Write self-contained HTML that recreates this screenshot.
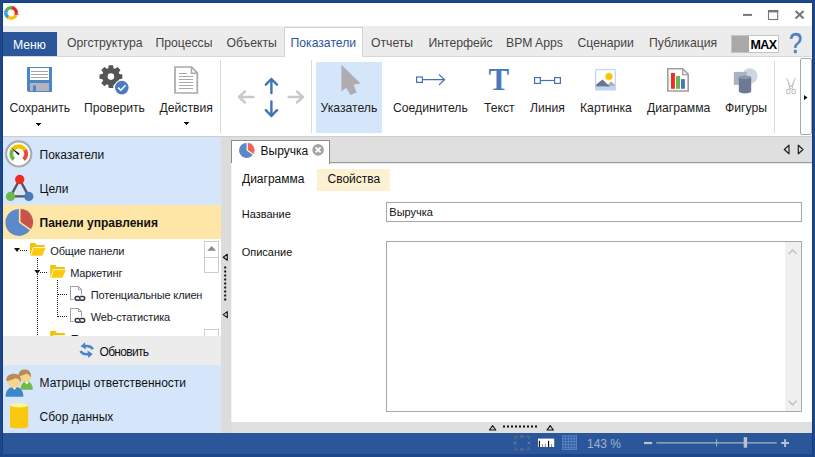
<!DOCTYPE html>
<html><head><meta charset="utf-8">
<style>
html,body{margin:0;padding:0;}
body{width:815px;height:457px;position:relative;overflow:hidden;background:#1c478a;font-family:"Liberation Sans",sans-serif;}
.a{position:absolute;}
.t{position:absolute;white-space:nowrap;line-height:1;}
.tab{font-size:12.2px;color:#454545;top:36.7px;}
.rl{font-size:12.2px;color:#1e1e1e;top:101.6px;}
.pl{font-size:12px;color:#111;}
.tr{font-size:11px;color:#1a1a2a;letter-spacing:-0.15px;}
svg{position:absolute;overflow:visible;}
</style></head><body>
<!-- title bar -->
<div class="a" style="left:2px;top:2px;width:811px;height:452px;background:#123d80"></div>
<div class="a" style="left:3px;top:3px;width:809px;height:23px;background:#fff"></div>
<svg width="815" height="30" style="left:0;top:0" fill="none" stroke-width="3.6">
<g stroke-width="3.3">
<path d="M5.98 11.53A5.3 5.3 0 0 1 10.92 7.60" stroke="#5cb84a"/>
<path d="M11.02 10.50L10.81 4.70L12.91 7.92Z" fill="#5cb84a" stroke="none"/>
<path d="M11.84 7.65A5.3 5.3 0 0 1 16.35 13.64" stroke="#e8261d"/>
<path d="M13.48 13.23L19.22 14.04L15.69 15.55Z" fill="#e8261d" stroke="none"/>
<path d="M15.78 15.39A5.3 5.3 0 0 1 8.61 17.58" stroke="#f7c300"/>
<path d="M9.97 15.02L7.25 20.14L7.04 16.31Z" fill="#f7c300" stroke="none"/>
<path d="M7.84 17.08A5.3 5.3 0 0 1 5.85 12.16" stroke="#3b95e2"/>
<path d="M8.72 12.57L2.98 11.76L6.51 10.25Z" fill="#3b95e2" stroke="none"/>
</g>
<g stroke="#777" stroke-width="2">
<path d="M743 14.9H752"/>
<path d="M795.6 11L803.6 18.6M803.6 11L795.6 18.6" stroke-width="2.1"/>
</g>
<rect x="768.5" y="10.5" width="9.2" height="9" fill="none" stroke="#777" stroke-width="1.1"/>
<rect x="768" y="10" width="10.2" height="2.4" fill="#777" stroke="none"/>
</svg>
<!-- menu bar -->
<div class="a" style="left:3px;top:26px;width:809px;height:31px;background:#ececec"></div>
<div class="a" style="left:3px;top:56px;width:809px;height:1px;background:#d6d6d6"></div>
<div class="a" style="left:3px;top:32px;width:54px;height:24px;background:#2b579a"></div>
<div class="t" style="left:13px;top:38.7px;font-size:12.2px;color:#fff">Меню</div>
<div class="a" style="left:284px;top:27px;width:77px;height:30px;background:#fff;border:1px solid #d2d2d2;border-bottom:none"></div>
<div class="t tab" style="left:67px">Оргструктура</div>
<div class="t tab" style="left:155.5px">Процессы</div>
<div class="t tab" style="left:226.5px">Объекты</div>
<div class="t tab" style="left:290.5px;color:#2b579a">Показатели</div>
<div class="t tab" style="left:371px">Отчеты</div>
<div class="t tab" style="left:428.5px">Интерфейс</div>
<div class="t tab" style="left:506px">BPM Apps</div>
<div class="t tab" style="left:577.5px">Сценарии</div>
<div class="t tab" style="left:649px">Публикация</div>
<div class="a" style="left:731px;top:35px;width:46px;height:16px;background:#fff;border:1px solid #c4c4c4"></div>
<div class="a" style="left:732px;top:36px;width:17px;height:16px;background:#a9a9a9"></div>
<div class="t" style="left:750.5px;top:38.6px;font-size:12.5px;font-weight:bold;color:#000;letter-spacing:-0.6px">MAX</div>
<div class="t" style="left:789.4px;top:27.6px;font-size:29.5px;color:#4d7dbf;transform:scaleX(0.8);transform-origin:0 0;-webkit-text-stroke:0.45px #4d7dbf">?</div>
<!-- ribbon -->
<div class="a" style="left:3px;top:57px;width:809px;height:79px;background:#fff"></div>
<div class="a" style="left:3px;top:136px;width:809px;height:1px;background:#cdcdcd"></div>
<div class="t rl" style="left:9.5px">Сохранить</div>
<div class="t rl" style="left:84px">Проверить</div>
<div class="t rl" style="left:159.5px">Действия</div>
<div class="a" style="left:316px;top:62px;width:66px;height:71px;background:#d4e6fa"></div>
<div class="t rl" style="left:320.5px">Указатель</div>
<div class="t rl" style="left:393px">Соединитель</div>
<div class="t rl" style="left:484px">Текст</div>
<div class="t" style="left:488.4px;top:63.9px;font-family:'Liberation Serif',serif;font-weight:bold;font-size:31px;color:#4a7ab9">T</div>
<div class="t rl" style="left:530px">Линия</div>
<div class="t rl" style="left:580px">Картинка</div>
<div class="t rl" style="left:647px">Диаграмма</div>
<div class="t rl" style="left:725px">Фигуры</div>
<div class="a" style="left:220px;top:60px;width:1px;height:73px;background:#dadada"></div>
<div class="a" style="left:311px;top:60px;width:1px;height:73px;background:#dadada"></div>
<div class="a" style="left:774px;top:61px;width:1px;height:72px;background:#dadada"></div>
<div class="a" style="left:800px;top:58px;width:10px;height:75px;background:#fff;border:1px solid #a9a9a9;border-radius:2px"></div>
<svg width="815" height="140" style="left:0;top:0">
<!-- floppy -->
<path d="M27 67H52V92H28.5L27 90.5Z" fill="#4a86c9"/>
<rect x="30" y="68" width="19" height="12" fill="#fff"/>
<path d="M31 71.5H48M31 74.5H48M31 77.5H48" stroke="#a6a6a6" stroke-width="1"/>
<rect x="30" y="83" width="19" height="8" fill="#b4b4ba"/>
<rect x="33" y="85.5" width="3" height="5.5" fill="#4a86c9"/>
<path d="M36 123H41V124H40V125H39V126H38V125H37V124H36Z" fill="#111"/>
<path d="M184 122H189V123H188V124H187V125H186V124H185V123H184Z" fill="#111"/>
<!-- gear -->
<path d="M108.33 68.18 L108.69 65.21 L113.11 65.21 L113.47 68.18 L115.03 68.83 L117.39 66.98 L120.52 70.11 L118.67 72.47 L119.32 74.03 L122.29 74.39 L122.29 78.81 L119.32 79.17 L118.67 80.73 L120.52 83.09 L117.39 86.22 L115.03 84.37 L113.47 85.02 L113.11 87.99 L108.69 87.99 L108.33 85.02 L106.77 84.37 L104.41 86.22 L101.28 83.09 L103.13 80.73 L102.48 79.17 L99.51 78.81 L99.51 74.39 L102.48 74.03 L103.13 72.47 L101.28 70.11 L104.41 66.98 L106.77 68.83Z" fill="#555"/>
<circle cx="110.9" cy="76.6" r="3.3" fill="#fff"/>
<circle cx="121.8" cy="87.6" r="7.8" fill="#fff"/>
<circle cx="121.8" cy="87.6" r="6.8" fill="#4a7cc1"/>
<path d="M118.2 87.6L120.8 90.2L125.6 85.2" stroke="#fff" stroke-width="1.6" fill="none"/>
<!-- doc -->
<path d="M175 67H191.5L197.3 72.8V93H175Z" fill="#fff" stroke="#a9a9a9" stroke-width="1.7"/>
<path d="M191.5 67V73.2H197.3" fill="none" stroke="#a9a9a9" stroke-width="1.5"/>
<path d="M179 73.5H187M179 76.5H193M179 79.5H193M179 82.5H193M179 85.5H193M179 88.5H193" stroke="#a9a9a9" stroke-width="1"/>
<!-- arrows -->
<g fill="none" stroke-width="2.4" stroke-linecap="round" stroke-linejoin="round">
<path d="M271.4 79V93M265.8 84.6L271.4 79L277 84.6" stroke="#3f73b9"/>
<path d="M271.4 101.5V116M265.8 110.2L271.4 116L277 110.2" stroke="#3f73b9"/>
<path d="M239 97H253.5M245 91.5L239 97L245 102.5" stroke="#c9c9c9"/>
<path d="M288.6 97H303M297 91.5L303 97L297 102.5" stroke="#c9c9c9"/>
</g>
<!-- pointer -->
<path d="M341.4 64.8V91.5L346.2 87.8L350.3 95L356.7 92.6L353.6 84.7L360.6 83.5Z" fill="#b0acb1"/>
<!-- connector -->
<g fill="none" stroke="#4672b5" stroke-width="1.2">
<rect x="416.6" y="77" width="5.8" height="5.4"/>
<path d="M422.4 79.7H444.5M439 74.4L444.5 79.7L439 85"/>
<rect x="534.6" y="77.6" width="5.8" height="5.8"/>
<rect x="554.6" y="77.6" width="5.8" height="5.8"/>
<path d="M540.4 80.5H554.6"/>
</g>
<!-- picture -->
<rect x="595" y="69" width="21" height="21.6" rx="1.5" fill="#bcd6fb"/>
<rect x="596.2" y="70.2" width="18.6" height="16.4" fill="#fff"/>
<circle cx="609" cy="76.5" r="4.2" fill="#fbe9a0"/>
<circle cx="609" cy="76.5" r="3.2" fill="#f7c500"/>
<path d="M606 86.6L611.2 81.2L614.8 84.8V86.6Z" fill="#b3aeb2"/>
<path d="M596.2 86.6V84.4L602.5 79.4L609.8 86.6Z" fill="#6b7591"/>
<!-- chart -->
<path d="M667.8 68.8H682.7L688.2 74.3V91H667.8Z" fill="#fff" stroke="#a19d9d" stroke-width="1.6"/>
<path d="M682.7 68.8V74.6H688.2" fill="none" stroke="#a19d9d" stroke-width="1.4"/>
<rect x="671" y="73" width="3.9" height="15.8" fill="#ee2b25"/>
<rect x="676" y="76" width="4" height="12.8" fill="#6ab64b"/>
<rect x="681" y="79.1" width="3.9" height="9.7" fill="#4a75b5"/>
<!-- shapes -->
<circle cx="749.8" cy="76" r="7.7" fill="#cdd5e1"/>
<rect x="733.8" y="71.9" width="13" height="13" fill="#a9b3c6"/>
<path d="M738.8 77.2V91.6A6.2 1.8 0 0 0 751.2 91.6V77.2Z" fill="#6d7a95"/>
<ellipse cx="745" cy="77.2" rx="6.2" ry="1.8" fill="#8c97ad"/>
<!-- scissors -->
<path d="M786.2 78L787.2 78L791 86.4L789.4 87.2Z" fill="#c6c6c6"/>
<path d="M795.8 78L794.8 78L791 86.4L792.6 87.2Z" fill="#c6c6c6"/>
<g fill="none" stroke="#c2c2c2" stroke-width="1.1">
<ellipse cx="791" cy="87.4" rx="1.6" ry="1.1"/>
<rect x="786.6" y="89.4" width="3.4" height="4.2" rx="1.2"/>
<rect x="792" y="89.4" width="3.4" height="4.2" rx="1.2"/>
</g>
<path d="M804 95L807.5 97.5L804 100.2Z" fill="#111"/>
</svg>
<!-- left panel -->
<div class="a" style="left:3px;top:137px;width:218px;height:296px;background:#d5e6fa"></div>
<div class="a" style="left:3px;top:205px;width:218px;height:34px;background:#fee6a6"></div>
<div class="a" style="left:3px;top:239px;width:218px;height:97px;background:#fff"></div>
<svg width="230" height="457" style="left:0;top:0">
<!-- gauge -->
<circle cx="18.7" cy="153.9" r="12.6" fill="#fff" stroke="#acacac" stroke-width="2.2"/>
<g fill="none" stroke-width="4">
<path d="M13.75 159.40A7.4 7.4 0 0 1 12.42 149.98" stroke="#6cb84a"/>
<path d="M12.42 149.98A7.4 7.4 0 0 1 24.98 149.98" stroke="#f6c200"/>
<path d="M24.98 149.98A7.4 7.4 0 0 1 23.65 159.40" stroke="#e8493a"/>
</g>
<path d="M10.8 147.6L19.6 153.6L18.4 155.2Z" fill="#111"/>
<!-- triangle -->
<path d="M19.7 179.5L10.5 196.4H28.8Z" fill="none" stroke="#525669" stroke-width="2.4"/>
<circle cx="19.7" cy="179.5" r="4.7" fill="#f02b21"/>
<circle cx="10.5" cy="196.4" r="4.6" fill="#6cb94b"/>
<circle cx="28.8" cy="196.4" r="4.6" fill="#4b79b8"/>
<!-- pie -->
<path d="M18.9 222.4L29.96 230.14A13.5 13.5 0 1 1 18.9 208.9Z" fill="#5b89c9"/>
<path d="M20.0 222.0V208.50A13.5 13.5 0 0 1 31.06 229.74Z" fill="#c9534a" stroke="#fee6a6" stroke-width="0.9"/>
<!-- tree -->
<path d="M14 248H20L17 252Z" fill="#111"/>
<path d="M34.3 270H40.3L37.3 274Z" fill="#111"/>
<g stroke="#222" stroke-width="1" stroke-dasharray="1 1" fill="none">
<path d="M20 250.5H27"/>
<path d="M37.5 258V337"/>
<path d="M40 272.5H47"/>
<path d="M57.5 280V317"/>
<path d="M58 294.5H67M58 316.5H67"/>
</g>
<g id="fold">
<path d="M30 243H35.3L36.6 245H44.6V247.4H33.2L30.6 255.8H30Z" fill="#f3c204"/>
<path d="M33.2 247.6H45.8L42.2 255.8H30.6Z" fill="#f8cb0f"/>
<path d="M30.6 255.8L33.2 247.6H45.8" stroke="#fff" stroke-width="0.8" fill="none"/>
</g>
<use href="#fold" x="20.2" y="22"/>
<use href="#fold" x="20.2" y="88"/>
<g id="dlink">
<path d="M73.8 299.5H70.5V286.5H78.5L81.5 289.5V294.6" fill="none" stroke="#a29e9e" stroke-width="1"/>
<path d="M78.5 286.5V289.5H81.5" fill="none" stroke="#a29e9e" stroke-width="1"/>
<path d="M79.6 300.2H77A1.85 1.85 0 0 1 77 296.5H78.4C79.6 296.5 79.9 297.6 79.9 298.4M80.2 296.5H82.9A1.85 1.85 0 0 1 82.9 300.2H81.5C80.3 300.2 79.9 299.2 79.9 298.4" fill="none" stroke="#2b304b" stroke-width="1.4"/>
</g>
<use href="#dlink" y="22"/>
<!-- people -->
<path d="M20.4 389.8C20.4 384.2 23.6 381.2 26.8 381.2C30 381.2 32.8 384.2 32.8 389.8Z" fill="#72b84b"/>
<path d="M24.6 382L26.8 384.2L29 382Z" fill="#fff"/>
<circle cx="25.2" cy="376.2" r="6" fill="#f4d58c"/>
<path d="M18.6 376.4C18 371.2 21.4 369.4 25 369.4C29.4 369.4 31.6 372.6 30.8 377.6C29.8 375 28.2 374.2 26.2 373.4C24.6 375 21.6 375.4 18.6 376.4Z" fill="#b98b5b"/>
<path d="M5.6 396.8C5.6 390 9.5 386.8 14.5 386.8C19.5 386.8 23.4 390 23.4 396.8Z" fill="#3e86c7"/>
<path d="M12.2 387.2L14.5 389.8L16.8 387.2Z" fill="#fff"/>
<circle cx="14" cy="381.2" r="6.8" fill="#f4d58c"/>
<path d="M6.4 381C5.8 376 9.6 373.8 14 373.8C19 373.8 21.8 377 20.8 382.6C19.8 379.6 18.2 378.8 15.8 378C13.6 379.8 10.2 380.2 6.4 381Z" fill="#b98b5b"/>
<!-- cylinder -->
<path d="M9.9 405.3V426.4C9.9 429 28.2 429 28.2 426.4V405.3Z" fill="#f9c80f"/>
<ellipse cx="19" cy="405.3" rx="9.1" ry="2.2" fill="#fdf49b"/>
</svg>
<div class="t pl" style="left:39.5px;top:148.8px">Показатели</div>
<div class="t pl" style="left:39.5px;top:182.8px">Цели</div>
<div class="t pl" style="left:39.5px;top:216.8px;font-weight:bold">Панели управления</div>
<div class="t pl" style="left:39.5px;top:376.8px">Матрицы ответственности</div>
<div class="t pl" style="left:39.5px;top:410.8px">Сбор данных</div>
<div class="t tr" style="left:50.3px;top:246.1px">Общие панели</div>
<div class="t tr" style="left:70.2px;top:268.1px">Маркетинг</div>
<div class="t tr" style="left:90.7px;top:290.2px">Потенциальные клиен</div>
<div class="t tr" style="left:90.7px;top:312.2px">Web-статистика</div>
<!-- tree extra -->
<div class="t tr" style="left:70.7px;top:334.1px">Проекты</div>
<div class="a" style="left:204px;top:241px;width:13px;height:15px;background:#fff;border:1px solid #cdcdcd"></div>
<div class="a" style="left:204px;top:257px;width:13px;height:14px;background:#fff;border:1px solid #cdcdcd"></div>
<div class="a" style="left:204px;top:329px;width:13px;height:10px;background:#fff;border:1px solid #cdcdcd"></div>
<div class="a" style="left:3px;top:336px;width:218px;height:29px;background:#ececec"></div>
<svg width="815" height="457" style="left:0;top:0">
<path d="M80.6 346.2L85 342.2L86 349.6Z" fill="#4a86c9"/>
<path d="M84.5 346.2C88 345.6 91.4 346.4 92.8 349.2" fill="none" stroke="#4a86c9" stroke-width="2.6"/>
<path d="M92.8 354L88.4 358L87.4 350.6Z" fill="#4a86c9"/>
<path d="M88.9 354C85.4 354.6 82 353.8 80.6 351" fill="none" stroke="#4a86c9" stroke-width="2.6"/>

<path d="M207.2 250.8L211.6 246L216 250.8Z" fill="#8a8a8a"/>
</svg>
<div class="t tr" style="left:99.5px;top:345.8px;font-size:12px;letter-spacing:-0.7px;color:#111">Обновить</div>
<!-- splitter -->
<div class="a" style="left:221px;top:137px;width:11px;height:296px;background:#dcdcdc"></div>
<svg width="815" height="457" style="left:0;top:0">
<path d="M227.3 254.2L223.2 257.2L227.3 260.2Z" fill="#d6d6d6" stroke="#111" stroke-width="1.1" stroke-linejoin="round"/>
<path d="M227.3 311.6L223.2 314.6L227.3 317.6Z" fill="#d6d6d6" stroke="#111" stroke-width="1.1" stroke-linejoin="round"/>
<path d="M225.2 266.5V302" stroke="#111" stroke-width="2" stroke-dasharray="2 2"/>
</svg>
<!-- doc area -->
<div class="a" style="left:232px;top:137px;width:580px;height:296px;background:#dfdfdf"></div>
<div class="a" style="left:232px;top:162px;width:580px;height:1px;background:#9c9c9c"></div>
<div class="a" style="left:232px;top:163px;width:580px;height:1px;background:#e9e9e9"></div>
<div class="a" style="left:232px;top:164px;width:580px;height:258px;background:#fff"></div>
<div class="a" style="left:231px;top:140px;width:97px;height:23px;background:#fff;border:1px solid #8c8c8c;border-bottom:none"></div>
<div class="a" style="left:231px;top:163px;width:1px;height:259px;background:#f4f4f4"></div>
<svg width="815" height="457" style="left:0;top:0">
<path d="M246.6 150.4L252.74 154.70A7.5 7.5 0 1 1 246.6 142.9Z" fill="#5a88c9"/>
<path d="M247.4 150.1V142.60A7.5 7.5 0 0 1 253.54 154.40Z" fill="#ef6355" stroke="#fff" stroke-width="0.7"/>
<circle cx="318.1" cy="149.9" r="5.8" fill="#a3a3a3"/>
<path d="M315.6 147.4L320.6 152.4M320.6 147.4L315.6 152.4" stroke="#fff" stroke-width="1.8"/>
<path d="M789 145.2L784.3 149.5L789 153.8Z" fill="none" stroke="#222" stroke-width="1.2" stroke-linejoin="round"/>
<path d="M798.3 145.2L803 149.5L798.3 153.8Z" fill="none" stroke="#222" stroke-width="1.2" stroke-linejoin="round"/>
</svg>
<div class="t" style="left:260.5px;top:144.7px;font-size:12px;color:#111">Выручка</div>
<div class="a" style="left:317px;top:169px;width:73px;height:22px;background:#fdf1d4"></div>
<div class="t" style="left:242px;top:172.6px;font-size:12px;color:#111">Диаграмма</div>
<div class="t" style="left:327.5px;top:172.6px;font-size:12px;color:#111">Свойства</div>
<div class="t" style="left:241.7px;top:208.7px;font-size:11px;color:#111">Название</div>
<div class="t" style="left:241.7px;top:246.7px;font-size:11px;color:#111">Описание</div>
<div class="a" style="left:386px;top:202px;width:414px;height:18px;background:#fff;border:1px solid #a8a8a8"></div>
<div class="t" style="left:389.3px;top:207px;font-size:11px;color:#111">Выручка</div>
<div class="a" style="left:386px;top:241px;width:414px;height:169px;background:#fff;border:1px solid #a8a8a8"></div>
<div class="a" style="left:785px;top:242px;width:16px;height:169px;background:#f0f0f0"></div>
<svg width="815" height="457" style="left:0;top:0" fill="none" stroke="#c4c4c4" stroke-width="1.6">
<path d="M788.6 254L792.6 250L796.6 254"/>
<path d="M788.6 400.8L792.6 404.8L796.6 400.8"/>
</svg>
<div class="a" style="left:232px;top:422px;width:580px;height:11px;background:#e0e0e0"></div>
<!-- status bar -->
<div class="a" style="left:3px;top:433px;width:809px;height:21px;background:#2b579a"></div>
<svg width="815" height="457" style="left:0;top:0">
<path d="M489.4 430L492.6 425.6L495.8 430Z" fill="#d6d6d6" stroke="#111" stroke-width="1.1" stroke-linejoin="round"/>
<path d="M547 430L550.2 425.6L553.4 430Z" fill="#d6d6d6" stroke="#111" stroke-width="1.1" stroke-linejoin="round"/>
<path d="M503 426.5H538" stroke="#111" stroke-width="2" stroke-dasharray="2 2"/>
<path d="M515 439.5V436.5H518M526 436.5H529V439.5M529 446.5V449.5H526M518 449.5H515V446.5" fill="none" stroke="#6d6a6c" stroke-width="1"/>
<path d="M520.5 435L523.5 438M523.5 435L520.5 438M520.5 448L523.5 451M523.5 448L520.5 451M513.5 441.5L516.5 444.5M516.5 441.5L513.5 444.5M527.5 441.5L530.5 444.5M530.5 441.5L527.5 444.5" stroke="#5b80bd" stroke-width="0.9"/>
<rect x="538" y="438.6" width="16.2" height="8.4" fill="#fff"/>
<path d="M539.4 440.8V447M548.6 440.8V447" stroke="#000" stroke-width="1.1"/>
<path d="M542.6 444V447M545.4 444V447M551.6 444V447" stroke="#888" stroke-width="1"/>
<g stroke="#5a86c6" stroke-width="1">
<path d="M562.8 435.3V449.7M565.6 435.3V449.7M568.4 435.3V449.7M571.2 435.3V449.7M574 435.3V449.7M576.4 435.3V449.7"/>
<path d="M562 436H577M562 438.8H577M562 441.6H577M562 444.4H577M562 447.2H577M562 449.3H577"/>
</g>
<path d="M644 443H652.2" stroke="#b9c1cc" stroke-width="2.2"/>
<path d="M656.3 442.9H776.7" stroke="#aab4c2" stroke-width="1.4"/>
<path d="M716.6 439.2V446.4" stroke="#aab4c2" stroke-width="1"/>
<rect x="743.7" y="437.1" width="3.4" height="10.6" fill="#b9c1cc"/>
<path d="M781.2 443H789M785.1 439.2V447" stroke="#b9c1cc" stroke-width="2"/>
</svg>
<div class="t" style="left:587px;top:437.5px;font-size:12px;color:#9fb2d0">143 %</div>
</body></html>
